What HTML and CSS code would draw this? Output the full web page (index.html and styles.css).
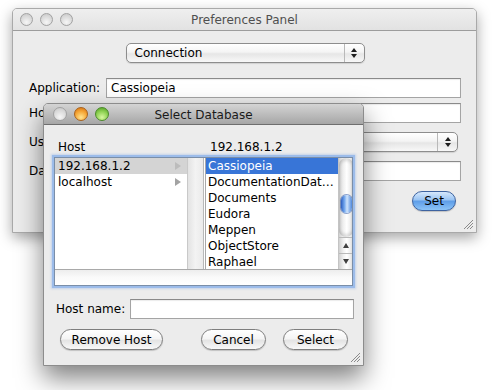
FILE: index.html
```html
<!DOCTYPE html>
<html lang="en">
<head>
    <meta charset="UTF-8">
    <meta name="viewport" content="width=device-width, initial-scale=1.0">
    <title>Preferences Panel</title>
    <link rel="stylesheet" href="styles.css">
</head>
<body>
    <div class="window prefs">
        <div class="titlebar">
            <div class="lights">
                <span class="light"></span>
                <span class="light"></span>
                <span class="light"></span>
            </div>
            <div class="title">Preferences Panel</div>
        </div>
        <div class="prefs-body">
            <div class="popup section-popup">
                <span class="popup-text">Connection</span>
                <span class="stepper"><i class="up"></i><i class="down"></i></span>
            </div>
            <div class="form">
                <div class="row">
                    <span class="label">Application:</span>
                    <div class="field">Cassiopeia</div>
                </div>
                <div class="row">
                    <span class="label">Host:</span>
                    <div class="field"></div>
                </div>
                <div class="row row-wide">
                    <span class="label">User:</span>
                    <div class="popup user-popup">
                        <span class="popup-text"></span>
                        <span class="stepper"><i class="up"></i><i class="down"></i></span>
                    </div>
                </div>
                <div class="row row-wide">
                    <span class="label">Database:</span>
                    <div class="field"></div>
                </div>
            </div>
            <div class="actions">
                <button class="btn btn-default set-btn">Set</button>
            </div>
        </div>
        <svg class="grip" width="11" height="11" viewBox="0 0 11 11">
            <path d="M10 1 L1 10 M10 4 L4 10 M10 7 L7 10" stroke="#8a8a8a" stroke-width="1"/>
        </svg>
    </div>

    <div class="window dialog">
        <div class="titlebar active">
            <div class="lights">
                <span class="light"></span>
                <span class="light orange"></span>
                <span class="light green"></span>
            </div>
            <div class="title">Select Database</div>
        </div>
        <div class="dialog-body">
            <div class="browser-head">
                <span class="head-host">Host</span>
                <span>192.168.1.2</span>
            </div>
            <div class="browser">
                <div class="columns">
                    <div class="column col-hosts">
                        <ul class="list">
                            <li class="item picked"><i class="arrow"></i>192.168.1.2</li>
                            <li class="item"><i class="arrow"></i>localhost</li>
                        </ul>
                        <div class="empty-scroller"></div>
                    </div>
                    <div class="column col-dbs">
                        <ul class="list">
                            <li class="item selected">Cassiopeia</li>
                            <li class="item">DocumentationDat…</li>
                            <li class="item">Documents</li>
                            <li class="item">Eudora</li>
                            <li class="item">Meppen</li>
                            <li class="item">ObjectStore</li>
                            <li class="item">Raphael</li>
                        </ul>
                        <div class="scrollbar">
                            <div class="track"><div class="knob"></div></div>
                            <div class="arrow-btn"><i class="tri-up"></i></div>
                            <div class="arrow-btn"><i class="tri-down"></i></div>
                        </div>
                    </div>
                </div>
                <div class="hscroll"></div>
            </div>
            <div class="host-row">
                <span class="host-label">Host name:</span>
                <div class="field"></div>
            </div>
            <div class="button-row">
                <button class="btn remove-btn">Remove Host</button>
                <button class="btn cancel-btn">Cancel</button>
                <button class="btn select-btn">Select</button>
            </div>
        </div>
        <svg class="grip" width="11" height="11" viewBox="0 0 11 11">
            <path d="M10 1 L1 10 M10 4 L4 10 M10 7 L7 10" stroke="#8a8a8a" stroke-width="1"/>
        </svg>
    </div>
</body>
</html>
```

FILE: styles.css
```css
body {
    margin: 0;
    padding: 0;
    width: 492px;
    height: 390px;
    background: #ffffff;
    font-family: "DejaVu Sans", sans-serif;
    font-size: 12px;
    color: #000;
    position: relative;
    overflow: hidden;
}

/* windows sit on a free desktop */
.window {
    position: absolute;
    box-sizing: border-box;
    background: #ececec;
    border: 1px solid #a9a9a9;
    border-radius: 5px 5px 0 0;
}
.prefs {
    left: 12px;
    top: 8px;
    width: 465px;
    height: 225px;
    box-shadow: 0 5px 14px rgba(0, 0, 0, 0.35);
}
.dialog {
    left: 43px;
    top: 103px;
    width: 321px;
    height: 263px;
    border-color: #8c8c8c;
    box-shadow: 0 12px 26px rgba(0, 0, 0, 0.5);
}

.titlebar {
    height: 21px;
    border-bottom: 1px solid #9c9c9c;
    border-radius: 4px 4px 0 0;
    background: linear-gradient(#efefef, #e2e2e2);
    display: grid;
    grid-template-columns: 1fr auto 1fr;
    align-items: center;
}
.titlebar.active {
    height: 20px;
    border-bottom-color: #6e6e6e;
    background: linear-gradient(#d4d4d4, #a6a6a6);
}
.title {
    color: #4f4f4f;
    padding-top: 1px;
}
.active .title {
    color: #1a1a1a;
}
.lights {
    display: flex;
    gap: 7px;
    padding-left: 7px;
}
.active .lights {
    gap: 7px;
    padding-left: 9px;
}
.light {
    width: 13px;
    height: 13px;
    border-radius: 50%;
    border: 1px solid #a2a2a2;
    box-sizing: border-box;
    background: radial-gradient(circle at 50% 75%, #f6f6f6, #d9d9d9 60%, #c4c4c4);
}
.active .light {
    width: 14px;
    height: 14px;
}
.light.orange {
    border-color: #a8621c;
    background: radial-gradient(circle at 50% 78%, #ffe590, #f5a534 55%, #d26e12);
}
.light.green {
    border-color: #4b8a2a;
    background: radial-gradient(circle at 50% 78%, #d8f8a0, #8cd050 55%, #4c9a22);
}

.grip {
    position: absolute;
    right: 2px;
    bottom: 2px;
}

/* preferences panel */
.prefs-body {
    padding: 12px 15px 0 16px;
    display: flex;
    flex-direction: column;
}
.popup {
    box-sizing: border-box;
    height: 20px;
    border: 1px solid #8d8d8d;
    border-radius: 5px;
    background: linear-gradient(#ffffff, #f4f4f4 45%, #e6e6e6 55%, #f8f8f8);
    box-shadow: 0 1px 1px rgba(0, 0, 0, 0.12);
    display: flex;
    align-items: center;
}
.section-popup {
    width: 239px;
    align-self: center;
}
.popup-text {
    flex: 1;
    padding-left: 8px;
}
.stepper {
    width: 19px;
    height: 100%;
    border-left: 1px solid #b9b9b9;
    display: flex;
    flex-direction: column;
    align-items: center;
    justify-content: center;
    gap: 2px;
}
.stepper i {
    width: 0;
    height: 0;
    border-left: 3px solid transparent;
    border-right: 3px solid transparent;
}
.stepper .up {
    border-bottom: 4px solid #1e1e1e;
}
.stepper .down {
    border-top: 4px solid #1e1e1e;
}

.form {
    margin-top: 15px;
    display: flex;
    flex-direction: column;
    gap: 5px;
}
.row {
    display: flex;
    align-items: center;
}
.row-wide {
    margin-top: 4px;
}
.label {
    width: 77px;
}
.field {
    flex: 1;
    box-sizing: border-box;
    height: 20px;
    border: 1px solid #a4a4a4;
    border-top-color: #8a8a8a;
    background: #fff;
    box-shadow: inset 0 1px 1px rgba(0, 0, 0, 0.08);
    padding: 2px 4px;
    line-height: 15px;
}
.user-popup {
    flex: 1;
    margin-right: 3px;
}

.actions {
    margin-top: 10px;
    display: flex;
    justify-content: flex-end;
    padding-right: 5px;
}

.btn {
    box-sizing: border-box;
    height: 21px;
    padding: 0;
    font-family: "DejaVu Sans", sans-serif;
    font-size: 12px;
    color: #000;
    border: 1px solid #7e7e7e;
    border-radius: 11px;
    background: linear-gradient(#ffffff, #f5f5f5 45%, #e4e4e4 55%, #f8f8f8);
    box-shadow: 0 1px 1px rgba(0, 0, 0, 0.18);
}
.btn-default {
    border-color: #3e63a0;
    background: linear-gradient(#d6e8fc, #9cc6f4 42%, #5f9ee8 52%, #8cc4f8);
}
.set-btn {
    width: 44px;
    height: 20px;
}

/* select database dialog */
.dialog-body {
    padding: 14px 10px 0 10px;
    display: flex;
    flex-direction: column;
}
.browser-head {
    display: flex;
    height: 16px;
    line-height: 16px;
    padding-left: 4px;
    margin-bottom: 2px;
}
.head-host {
    width: 152px;
}
.browser {
    border: 1px solid #7a8ea8;
    box-shadow: 0 0 0 2px #9cbcea, 0 0 2px 3px rgba(120, 160, 225, 0.35);
    background: #fff;
    display: flex;
    flex-direction: column;
}
.columns {
    height: 111px;
    display: flex;
    overflow: hidden;
}
.column {
    display: flex;
}
.col-hosts {
    width: 148px;
    border-right: 1px solid #b9b9b9;
}
.col-dbs {
    flex: 1;
    margin-left: 1px;
    border-left: 1px solid #a9a9a9;
}
.list {
    list-style: none;
    margin: 0;
    padding: 0;
    width: 132px;
}
.item {
    height: 16px;
    line-height: 16px;
    padding-left: 3px;
    white-space: nowrap;
    overflow: hidden;
}
.col-dbs .item {
    padding-left: 2px;
}
.item.picked {
    background: #d4d4d4;
}
.item.selected {
    background: #3875d7;
    color: #fff;
}
.arrow {
    float: right;
    margin: 4px 6px 0 0;
    width: 0;
    height: 0;
    border-top: 4px solid transparent;
    border-bottom: 4px solid transparent;
    border-left: 6px solid #a3a3a3;
}
.picked .arrow {
    border-left-color: #bcbcbc;
}
.empty-scroller {
    width: 15px;
    border-left: 1px solid #c9c9c9;
    background: linear-gradient(to right, #e3e3e3, #f3f3f3 50%, #eaeaea);
}

.scrollbar {
    width: 14px;
    border-left: 1px solid #c4c4c4;
    display: flex;
    flex-direction: column;
    background: linear-gradient(to right, #d0d0d0, #efefef 30%, #ffffff 55%, #eeeeee 80%, #d6d6d6);
}
.track {
    flex: 1;
    padding-top: 37px;
    border-radius: 7px;
    box-shadow: inset 0 3px 3px rgba(0, 0, 0, 0.12), inset 0 -3px 3px rgba(0, 0, 0, 0.12);
}
.knob {
    width: 11px;
    height: 18px;
    margin: 0 auto;
    border-radius: 6px;
    background: linear-gradient(to right, #2d5fc0, #6fa4ec 30%, #cfe4fc 55%, #4f88dc);
    box-shadow: 0 0 0 1px rgba(40, 80, 160, 0.55);
}
.arrow-btn {
    height: 15px;
    border-top: 1px solid #b9b9b9;
    display: flex;
    align-items: center;
    justify-content: center;
}
.tri-up,
.tri-down {
    width: 0;
    height: 0;
    border-left: 3px solid transparent;
    border-right: 3px solid transparent;
}
.tri-up {
    border-bottom: 5px solid #404040;
}
.tri-down {
    border-top: 5px solid #404040;
}
.hscroll {
    height: 15px;
    border-top: 1px solid #a9a9a9;
    background: linear-gradient(#ededed, #fafafa 50%, #ffffff);
}

.host-row {
    margin-top: 13px;
    display: flex;
    align-items: center;
    margin-right: -1px;
}
.host-label {
    width: 74px;
    padding-left: 2px;
}
.button-row {
    margin-top: 10px;
    display: flex;
    padding: 0 5px 0 6px;
}
.remove-btn {
    width: 103px;
}
.cancel-btn {
    width: 65px;
    margin-left: auto;
}
.select-btn {
    width: 65px;
    margin-left: 17px;
}
```
